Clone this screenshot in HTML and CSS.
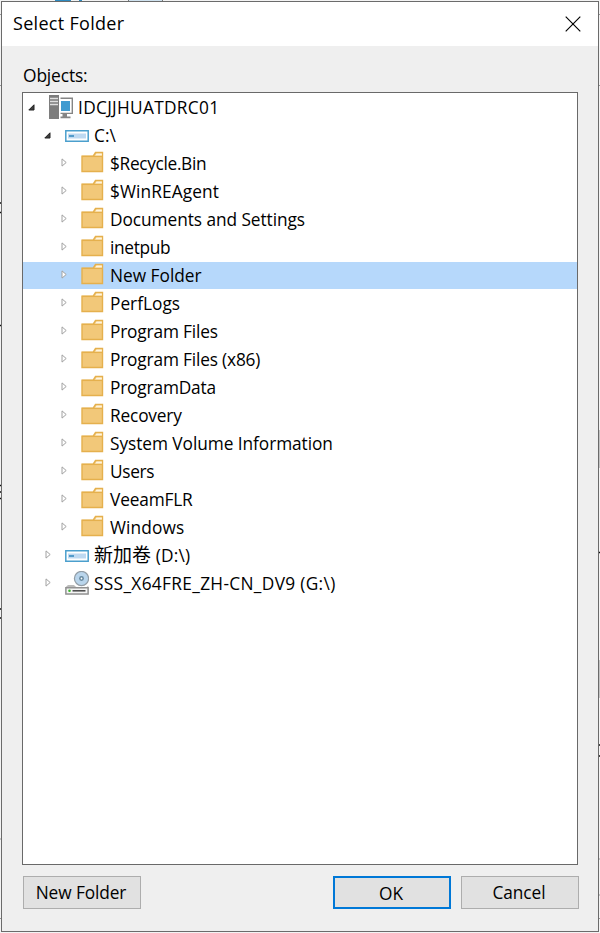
FILE: index.html
```
<!DOCTYPE html>
<html lang="en">
<head>
<meta charset="utf-8">
<title>Select Folder</title>
<link rel="stylesheet" href="styles.css">
</head>
<body>
<svg width="0" height="0" class="defs">
  <symbol id="open" viewBox="0 0 7 7"><path d="M6 .8V6H.8z" fill="#404040" stroke="#222" stroke-width="1"/></symbol>
  <symbol id="closed" viewBox="0 0 7 9"><path d="M1 .9 5.2 4.5 1 8.1z" fill="#fff" stroke="#a2a2a2" stroke-width="1"/></symbol>
  <symbol id="folder" viewBox="0 0 24 22"><path d="M1 5.3H12L14.5 1.5H21.5V20.5H1z" fill="#f2c879" stroke="#e5b04d" stroke-width="1.4"/><path d="M14 4.7 15.5 2.5H20.9V4.7z" fill="#fff5df"/><path d="M1 5.4H22" stroke="#e5b04d" stroke-width="1.3"/></symbol>
  <symbol id="drive" viewBox="0 0 24 12"><path d="M.8.8H23.2V11.2H.8z" fill="#fff" stroke="#4b9fcd" stroke-width="1.5"/><path d="M3 3.5H21V8.5H3z" fill="#bed9f1"/><path d="M4 6H9" stroke="#4795c6" stroke-width="1.8"/></symbol>
  <symbol id="computer" viewBox="0 0 24 24"><path d="M0 0H10V24H0z" fill="#7d7d7d"/><path d="M1 3.5H9M1 6.5H9M1 9.5H9" stroke="#e0e0e0" stroke-width="1.3"/><path d="M11.5 3.2H23.3V18.4H11.5" fill="#fff" stroke="#858585" stroke-width="1.4"/><path d="M12 6H21V16H12z" fill="#419bd0"/><path d="M13.5 18H18V21.5H21.5V23.3H11.5V21.5H13.5z" fill="#858585"/></symbol>
  <symbol id="disc" viewBox="0 0 24 24"><circle cx="16.5" cy="7.5" r="7.1" fill="#b9d5ec" stroke="#929da6" stroke-width="1.2"/><circle cx="16.5" cy="7.5" r="2.4" fill="#66889f"/><circle cx="16.5" cy="7.5" r=".9" fill="#fff"/><path d="M3 14H9Q11 17 16.5 17T23.3 14.5V23.3H.7V16z" fill="#bbb"/><path d="M.9 16.8H23.1V23.1H.9z" fill="#f5f5f5" stroke="#929292" stroke-width="1.5"/><circle cx="4.5" cy="19.8" r="1.3" fill="#3cb42d"/><path d="M7.5 19.8H20.5" stroke="#505050" stroke-width="1.6"/></symbol>
</svg>
<svg class="backdrop" viewBox="0 0 600 933">
  <path d="M55 0H71V1H55zM79 0H82V1H79z" fill="#2d8ac0"/>
  <path d="M129 0H162V1H129z" fill="#cfe2ef"/>
  <path d="M128 0H129V1H128zM162 0H163V1H162z" fill="#777"/>
  <path d="M0 14.5H1M599 14.5H600M0 85.5H1M599 85.5H600M599 859H600M599 895H600M599 918.5H600M0 918.5H1M0 839H1M599 661H600M599 697H600" stroke="#999" stroke-width="1"/>
  <path d="M0 203H1M0 212.5H1M0 325.5H1M0 485.5H1M0 492H1M0 498.5H1M599 552.5H600M599 685H600M599 745H600M599 756H600M0 609H1M0 618H1" stroke="#111" stroke-width="1.3"/>
  <path d="M599 430H600V468H599zM599 661H600V697H599z" fill="#c4c4c4"/>
</svg>
<main class="dialog">
  <header class="titlebar"><h1 class="title">Select Folder</h1>
    <svg class="close" viewBox="0 0 16 16"><path d="M.7.7 15.3 15.3M15.3.7.7 15.3" stroke="#000" stroke-width="1.15"/></svg></header>
  <section class="content">
    <label class="label">Objects:</label>
    <div class="tree">
      <div class="row root"><svg class="arrow open"><use href="#open"/></svg><svg class="icon computer"><use href="#computer"/></svg><span class="host">IDCJJHUATDRC01</span></div>
      <div class="row volume"><svg class="arrow open"><use href="#open"/></svg><svg class="icon drive"><use href="#drive"/></svg><span>C:\</span></div>
      <div class="row"><svg class="arrow"><use href="#closed"/></svg><svg class="icon folder"><use href="#folder"/></svg><span class="tight">$Recycle.Bin</span></div>
      <div class="row"><svg class="arrow"><use href="#closed"/></svg><svg class="icon folder"><use href="#folder"/></svg><span class="wide">$WinREAgent</span></div>
      <div class="row"><svg class="arrow"><use href="#closed"/></svg><svg class="icon folder"><use href="#folder"/></svg><span class="even">Documents and Settings</span></div>
      <div class="row"><svg class="arrow"><use href="#closed"/></svg><svg class="icon folder"><use href="#folder"/></svg><span class="tight">inetpub</span></div>
      <div class="row selected"><svg class="arrow"><use href="#closed"/></svg><svg class="icon folder"><use href="#folder"/></svg><span>New Folder</span></div>
      <div class="row"><svg class="arrow"><use href="#closed"/></svg><svg class="icon folder"><use href="#folder"/></svg><span>PerfLogs</span></div>
      <div class="row"><svg class="arrow"><use href="#closed"/></svg><svg class="icon folder"><use href="#folder"/></svg><span class="snug">Program Files</span></div>
      <div class="row"><svg class="arrow"><use href="#closed"/></svg><svg class="icon folder"><use href="#folder"/></svg><span class="snug">Program Files (x86)</span></div>
      <div class="row"><svg class="arrow"><use href="#closed"/></svg><svg class="icon folder"><use href="#folder"/></svg><span class="snug">ProgramData</span></div>
      <div class="row"><svg class="arrow"><use href="#closed"/></svg><svg class="icon folder"><use href="#folder"/></svg><span class="snug">Recovery</span></div>
      <div class="row"><svg class="arrow"><use href="#closed"/></svg><svg class="icon folder"><use href="#folder"/></svg><span class="even">System Volume Information</span></div>
      <div class="row"><svg class="arrow"><use href="#closed"/></svg><svg class="icon folder"><use href="#folder"/></svg><span class="tight">Users</span></div>
      <div class="row"><svg class="arrow"><use href="#closed"/></svg><svg class="icon folder"><use href="#folder"/></svg><span class="snug">VeeamFLR</span></div>
      <div class="row"><svg class="arrow"><use href="#closed"/></svg><svg class="icon folder"><use href="#folder"/></svg><span class="wide">Windows</span></div>
      <div class="row volume"><svg class="arrow"><use href="#closed"/></svg><svg class="icon drive"><use href="#drive"/></svg><span class="cjk"><b>新加卷</b> (D:\)</span></div>
      <div class="row volume"><svg class="arrow"><use href="#closed"/></svg><svg class="icon disc"><use href="#disc"/></svg><span class="media">SSS_X64FRE_ZH-CN_DV9 (G:\)</span></div>
    </div>
    <footer class="actions"><button>New Folder</button><button class="primary">OK</button><button>Cancel</button></footer>
  </section>
</main>
</body>
</html>
```
FILE: styles.css
```
* { box-sizing: border-box; }
body { margin: 0; padding: 1px; height: 933px; background: #f3f3f3; color: #000; overflow: hidden; font: 400 17.3px/28px "Open Sans", "Noto Sans CJK SC", sans-serif; }
.defs { position: absolute; }
.backdrop { position: absolute; left: 0; top: 0; width: 600px; height: 933px; }
.dialog { position: relative; width: 598px; height: 931px; border: 1px solid #6b6b6b; background: #efefef; }
.titlebar { display: flex; justify-content: space-between; align-items: center; height: 44px; padding: 0 17px 0 11px; background: #fff; }
.title { margin: -2px 0 0; font-size: 18px; font-weight: 400; line-height: 28px; letter-spacing: .3px; }
.close { width: 16px; height: 16px; margin-top: -1px; }
.content { padding: 15px 20px 0; }
.label { display: block; height: 31px; padding-left: 1px; font-size: 17.4px; letter-spacing: -.15px; }
.tree { width: 556px; height: 773px; border: 1px solid #696969; background: #fff; }
.row { display: flex; align-items: center; height: 28px; padding-left: 38px; white-space: pre; }
.row.volume { padding-left: 22px; }
.row.root { padding-left: 5px; }
.row.selected { background: linear-gradient(transparent 1px, #b6d8fb 1px); }
.row span { margin-top: 2px; }
.row .tight { letter-spacing: -.33px; }
.row .snug { letter-spacing: -.17px; }
.row .even { letter-spacing: -.06px; }
.row .wide { letter-spacing: .1px; }
.row .host { letter-spacing: .3px; }
.row .media { letter-spacing: .33px; }
.row .cjk { margin-top: 0; letter-spacing: .2px; }
.cjk b { font-size: 19px; font-weight: 400; letter-spacing: 0; }
.arrow { width: 7px; height: 9px; flex: none; margin: -1px 13px 0 0; }
.arrow.open { height: 7px; margin: 0 14px 0 -1px; }
.root .arrow.open { margin-left: 0; }
.icon { flex: none; }
.folder { width: 24px; height: 22px; margin: -2px 5px 0 0; }
.drive { width: 24px; height: 12px; margin: 1px 5px 0 0; }
.computer { width: 24px; height: 24px; margin-right: 5px; }
.disc { width: 24px; height: 24px; margin: -1px 5px 0 0; }
.actions { display: flex; gap: 10px; width: 556px; margin: 11px 0 0 1px; }
button { width: 118px; height: 33px; padding: 1px 2px 0 0; border: 1px solid #adadad; background: #e1e1e1; color: #000; font: inherit; font-size: 17.3px; letter-spacing: -.1px; line-height: 30px; }
button:first-child { margin-right: auto; }
button.primary { border: 2px solid #0078d7; }
```
